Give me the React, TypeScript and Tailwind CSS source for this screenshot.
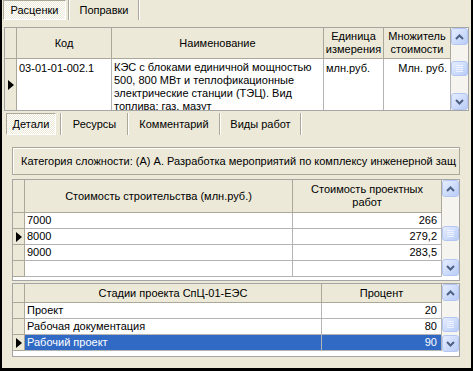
import React from "react";

const checker =
  "bg-[repeating-conic-gradient(#ffffff_0%_25%,#ece9d8_0%_50%)] bg-[length:2px_2px]";

function Chevron({ up = false }: { up?: boolean }) {
  return (
    <svg width="9" height="6" viewBox="0 0 9 6">
      <path
        d={up ? "M1 5L4.5 1.5L8 5" : "M1 1L4.5 4.5L8 1"}
        fill="none"
        stroke="#4d6185"
        strokeWidth="2"
      />
    </svg>
  );
}

function SbButton({ children, h = "h-[17px]" }: { children?: React.ReactNode; h?: string }) {
  return (
    <div
      className={`w-[17px] ${h} shrink-0 flex items-center justify-center rounded-[3px] border border-[#b3c7f2] bg-gradient-to-br from-[#e6edff] to-[#b9cdf8]`}
    >
      {children}
    </div>
  );
}

function Grip() {
  return (
    <div className="flex flex-col gap-[1px]">
      <div className="w-[7px] h-[1px] bg-[#eef3ff]" />
      <div className="w-[7px] h-[1px] bg-[#eef3ff]" />
      <div className="w-[7px] h-[1px] bg-[#eef3ff]" />
      <div className="w-[7px] h-[1px] bg-[#eef3ff]" />
    </div>
  );
}

function ScrollBar({ h, thumbMt }: { h: string; thumbMt: string }) {
  return (
    <div className={`w-[17px] ${h} flex flex-col bg-[#f5f4ef]`}>
      <SbButton>
        <Chevron up />
      </SbButton>
      <div className="flex-1">
        <div className={thumbMt}>
          <SbButton h="h-[15px]">
            <Grip />
          </SbButton>
        </div>
      </div>
      <SbButton>
        <Chevron />
      </SbButton>
    </div>
  );
}

function Pointer() {
  return (
    <div className="w-0 h-0 border-y-[5px] border-y-transparent border-l-[6px] border-l-black" />
  );
}

function Sep({ h = "h-full" }: { h?: string }) {
  return (
    <div className={`flex ${h} shrink-0`}>
      <div className="w-px bg-[#aca899]" />
      <div className="w-px bg-white" />
    </div>
  );
}

function TabButton({ label, w, active = false }: { label: string; w: string; active?: boolean }) {
  return (
    <div
      className={`${w} h-full shrink-0 flex items-center justify-center whitespace-nowrap ${
        active
          ? `${checker} border-l border-t border-[#aca899] border-r-white border-b-white border-r border-b`
          : ""
      }`}
    >
      {label}
    </div>
  );
}

const hd = "bg-[#ece9d8] border-r border-b border-[#aca899] flex items-center justify-center text-center leading-[13px] shrink-0";
const ind = "w-[12px] bg-[#ece9d8] border-r border-b border-[#aca899] flex items-center justify-center shrink-0";
const cell = "border-r border-b border-[#b4b4b4] flex items-center shrink-0 whitespace-nowrap overflow-hidden";

function MainGrid() {
  return (
    <div className="mx-[2px] mt-[7px] h-[84px] border border-[#a5a5a5] flex bg-white overflow-hidden">
      <div className="w-[446px] flex flex-col">
        <div className="h-[31px] flex">
          <div className={`${ind} h-full`} />
          <div className={`${hd} w-[95px]`}>Код</div>
          <div className={`${hd} w-[212px]`}>Наименование</div>
          <div className={`${hd} w-[60px]`}>
            Единица
            <br />
            измерения
          </div>
          <div className={`${hd} w-[67px]`}>
            Множитель
            <br />
            стоимости
          </div>
        </div>
        <div className="flex-1 flex overflow-hidden">
          <div className="w-[12px] bg-[#ece9d8] border-r border-[#aca899] flex items-center justify-center">
            <Pointer />
          </div>
          <div className="w-[95px] border-r border-[#b4b4b4] pl-[2px] pt-[3px] leading-[13px]">03-01-01-002.1</div>
          <div className="w-[212px] border-r border-[#b4b4b4] pl-[2px] pt-[2px] leading-[13px] whitespace-nowrap overflow-hidden">
            <div>КЭС с блоками единичной мощностью</div>
            <div>500, 800 МВт и теплофикационные</div>
            <div>электрические станции (ТЭЦ). Вид</div>
            <div>топлива: газ, мазут</div>
          </div>
          <div className="w-[60px] border-r border-[#b4b4b4] pl-[2px] pt-[3px] leading-[13px]">млн.руб.</div>
          <div className="w-[67px] border-r border-[#b4b4b4] pr-[3px] pt-[3px] leading-[13px] text-right">Млн. руб.</div>
        </div>
      </div>
      <ScrollBar h="h-[82px]" thumbMt="mt-[16px]" />
    </div>
  );
}

function CostGrid() {
  const rows = [
    ["7000", "266"],
    ["8000", "279,2"],
    ["9000", "283,5"],
    ["", ""],
  ];
  return (
    <div className="ml-[10px] mt-[4px] w-[448px] h-[102px] border border-[#a5a5a5] flex bg-white overflow-hidden">
      <div className="w-[429px] flex flex-col">
        <div className="h-[33px] flex">
          <div className={`${ind} h-full`} />
          <div className={`${hd} w-[268px]`}>Стоимость строительства (млн.руб.)</div>
          <div className={`${hd} w-[149px]`}>
            Стоимость проектных
            <br />
            работ
          </div>
        </div>
        {rows.map((r, i) => (
          <div key={i} className="h-[16px] flex">
            <div className={`${ind} h-full`}>{i === 1 && <Pointer />}</div>
            <div className={`${cell} w-[268px] pl-[2px]`}>{r[0]}</div>
            <div className={`${cell} w-[149px] justify-end pr-[4px]`}>{r[1]}</div>
          </div>
        ))}
      </div>
      <ScrollBar h="h-[96px]" thumbMt="mt-[29px]" />
    </div>
  );
}

function StageGrid() {
  const rows = [
    ["Проект", "20"],
    ["Рабочая документация", "80"],
    ["Рабочий проект", "90"],
  ];
  return (
    <div className="ml-[10px] mt-[2px] w-[448px] h-[74px] border border-[#a5a5a5] flex bg-white overflow-hidden">
      <div className="w-[429px] flex flex-col">
        <div className="h-[19px] flex">
          <div className={`${ind} h-full`} />
          <div className={`${hd} w-[297px]`}>Стадии проекта СпЦ-01-ЕЭС</div>
          <div className={`${hd} w-[120px]`}>Процент</div>
        </div>
        {rows.map((r, i) => {
          const sel = i === 2;
          const c = sel ? "bg-[#316ac5] text-white" : "";
          return (
            <div key={i} className="h-[16px] flex">
              <div className={`${ind} h-full`}>{sel && <Pointer />}</div>
              <div className={`${cell} ${c} w-[297px] pl-[2px]`}>{r[0]}</div>
              <div className={`${cell} ${c} w-[120px] justify-end pr-[4px]`}>{r[1]}</div>
            </div>
          );
        })}
      </div>
      <ScrollBar h="h-[68px]" thumbMt="mt-[16px]" />
    </div>
  );
}

export default function App() {
  return (
    <div className="w-[473px] h-[371px] bg-black pl-[2px] pr-[2px] pb-[3px] font-['Liberation_Sans',Arial,sans-serif] text-[11px] text-black">
      <div className="h-full bg-[#ece9d8] flex flex-col">
        <div className="h-[20px] flex pl-[1px] shrink-0">
          <TabButton label="Расценки" w="w-[63px]" active />
          <div className="w-[2px]" />
          <Sep />
          <TabButton label="Поправки" w="w-[68px]" />
          <Sep />
        </div>

        <MainGrid />

        <div className="h-[24px] pt-[2px] pl-[4px] flex shrink-0">
          <TabButton label="Детали" w="w-[50px]" active />
          <div className="w-[4px]" />
          <Sep />
          <TabButton label="Ресурсы" w="w-[65px]" />
          <Sep />
          <TabButton label="Комментарий" w="w-[90px]" />
          <Sep />
          <TabButton label="Виды работ" w="w-[79px]" />
          <Sep />
        </div>

        <div className="ml-[10px] mt-[12px] w-[448px] h-[28px] border border-[#aca899] shadow-[inset_1px_1px_0_#ffffff] flex items-center pl-[8px] whitespace-nowrap overflow-hidden shrink-0">
          Категория сложности: (А) А. Разработка мероприятий по комплексу инженерной защ
        </div>

        <CostGrid />
        <StageGrid />
      </div>
    </div>
  );
}
